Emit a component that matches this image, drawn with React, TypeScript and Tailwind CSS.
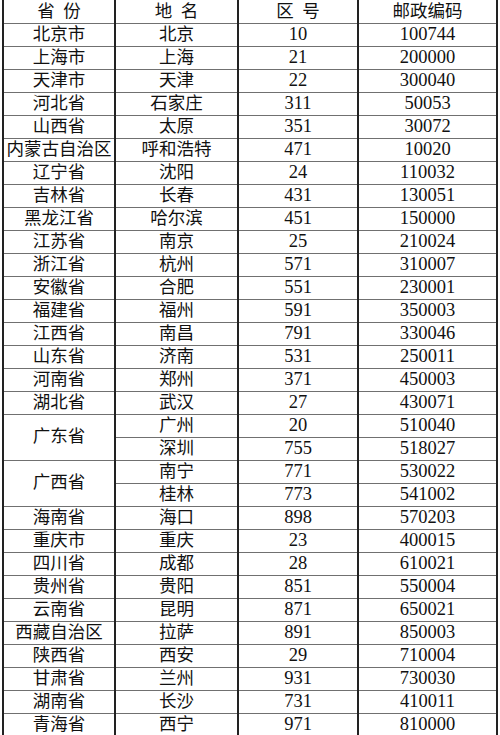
const ROWS: { prov?: string; span?: number; city: string; code: string; zip: string }[] = [
  { prov: "北京市", city: "北京", code: "10", zip: "100744" },
  { prov: "上海市", city: "上海", code: "21", zip: "200000" },
  { prov: "天津市", city: "天津", code: "22", zip: "300040" },
  { prov: "河北省", city: "石家庄", code: "311", zip: "50053" },
  { prov: "山西省", city: "太原", code: "351", zip: "30072" },
  { prov: "内蒙古自治区", city: "呼和浩特", code: "471", zip: "10020" },
  { prov: "辽宁省", city: "沈阳", code: "24", zip: "110032" },
  { prov: "吉林省", city: "长春", code: "431", zip: "130051" },
  { prov: "黑龙江省", city: "哈尔滨", code: "451", zip: "150000" },
  { prov: "江苏省", city: "南京", code: "25", zip: "210024" },
  { prov: "浙江省", city: "杭州", code: "571", zip: "310007" },
  { prov: "安徽省", city: "合肥", code: "551", zip: "230001" },
  { prov: "福建省", city: "福州", code: "591", zip: "350003" },
  { prov: "江西省", city: "南昌", code: "791", zip: "330046" },
  { prov: "山东省", city: "济南", code: "531", zip: "250011" },
  { prov: "河南省", city: "郑州", code: "371", zip: "450003" },
  { prov: "湖北省", city: "武汉", code: "27", zip: "430071" },
  { prov: "广东省", span: 2, city: "广州", code: "20", zip: "510040" },
  { city: "深圳", code: "755", zip: "518027" },
  { prov: "广西省", span: 2, city: "南宁", code: "771", zip: "530022" },
  { city: "桂林", code: "773", zip: "541002" },
  { prov: "海南省", city: "海口", code: "898", zip: "570203" },
  { prov: "重庆市", city: "重庆", code: "23", zip: "400015" },
  { prov: "四川省", city: "成都", code: "28", zip: "610021" },
  { prov: "贵州省", city: "贵阳", code: "851", zip: "550004" },
  { prov: "云南省", city: "昆明", code: "871", zip: "650021" },
  { prov: "西藏自治区", city: "拉萨", code: "891", zip: "850003" },
  { prov: "陕西省", city: "西安", code: "29", zip: "710004" },
  { prov: "甘肃省", city: "兰州", code: "931", zip: "730030" },
  { prov: "湖南省", city: "长沙", code: "731", zip: "410011" },
  { prov: "青海省", city: "西宁", code: "971", zip: "810000" },
];

// vertical rules are heavy and dark, horizontal ones thin and grey
const cell =
  "border-x-2 border-x-[#222] border-y border-y-[#707070] p-0 text-center align-middle leading-none";

export default function App() {
  return (
    <div className="w-[500px] h-[735px] overflow-hidden bg-white pl-[2px]">
      <table
        className="table-fixed border-collapse text-[#111] text-[17.5px]"
        style={{ fontFamily: '"Liberation Serif", "Noto Sans CJK SC", serif' }}
      >
        <colgroup>
          <col className="w-[112px]" />
          <col className="w-[123px]" />
          <col className="w-[120px]" />
          <col className="w-[139px]" />
        </colgroup>
        <thead>
          <tr className="h-[23px]">
            <th className={`${cell} border-t-0 font-normal`}>省&nbsp;&nbsp;份</th>
            <th className={`${cell} border-t-0 font-normal`}>地&nbsp;&nbsp;名</th>
            <th className={`${cell} border-t-0 font-normal`}>区&nbsp;&nbsp;号</th>
            <th className={`${cell} border-t-0 font-normal`}>邮政编码</th>
          </tr>
        </thead>
        <tbody>
          {ROWS.map((r) => (
            <tr key={r.city} className="h-[23px]">
              {r.prov && (
                <td className={cell} rowSpan={r.span ?? 1}>
                  {r.prov}
                </td>
              )}
              <td className={cell}>{r.city}</td>
              <td className={`${cell} text-[18.5px]`}>{r.code}</td>
              <td className={`${cell} text-[18.5px]`}>{r.zip}</td>
            </tr>
          ))}
        </tbody>
      </table>
    </div>
  );
}
